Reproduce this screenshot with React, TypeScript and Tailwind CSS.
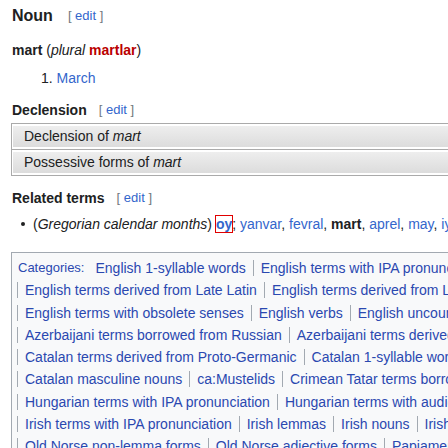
import React from "react";

const font = "font-['Liberation_Sans',Arial,sans-serif]";

function Edit({ className = "" }: { className?: string }) {
  return (
    <span className={`text-[13px] text-[#72777d] ${className}`}>
      [ <span className="text-[#3366cc]">edit</span> ]
    </span>
  );
}

function Cat({ children, first = false }: { children: React.ReactNode; first?: boolean }) {
  return (
    <span
      className={`inline-block leading-[16px] px-[7px] ${first ? "ml-[4px]" : "border-l border-[#a2a9b1]"}`}
    >
      {children}
    </span>
  );
}

const catRows: string[][] = [
  ["English terms derived from Late Latin", "English terms derived from Latin"],
  ["English terms with obsolete senses", "English verbs", "English uncountable nouns"],
  ["Azerbaijani terms borrowed from Russian", "Azerbaijani terms derived from Russian"],
  ["Catalan terms derived from Proto-Germanic", "Catalan 1-syllable words"],
  ["Catalan masculine nouns", "ca:Mustelids", "Crimean Tatar terms borrowed from Russian"],
  ["Hungarian terms with IPA pronunciation", "Hungarian terms with audio links"],
  ["Irish terms with IPA pronunciation", "Irish lemmas", "Irish nouns", "Irish masculine nouns"],
  ["Old Norse non-lemma forms", "Old Norse adjective forms", "Papiamentu lemmas"],
];

export default function App() {
  return (
    <div className={`w-[448px] h-[448px] overflow-hidden bg-white text-[14px] text-[#202122] ${font}`}>
      <div className="w-[760px] pt-[6px]">
        <div className="flex items-center h-[20px] pl-[12px]">
          <span className="text-[16px] font-bold">Noun</span>
          <Edit className="ml-[15px]" />
        </div>

        <div className="mt-[14px] h-[20px] leading-[20px] pl-[12px]">
          <b>mart</b> (<i>plural</i> <b className="text-[#ba0000]">martlar</b>)
        </div>

        <div className="mt-[8px] h-[20px] leading-[20px] pl-[41px]">
          1. <span className="text-[#3366cc]">March</span>
        </div>

        <div className="mt-[12px] flex items-center h-[20px] pl-[12px]">
          <span className="font-bold">Declension</span>
          <Edit className="ml-[12px]" />
        </div>

        <div className="mt-[3px] ml-[11px] border border-r-0 border-[#aaa]">
          <div className="px-[1px] py-[2px]">
            <div className="h-[21px] leading-[21px] pl-[11px] bg-gradient-to-b from-[#eeeeee] to-[#dcdcdc]">
              Declension of <i>mart</i>
            </div>
          </div>
          <div className="px-[1px] py-[2px] border-t border-[#aaa]">
            <div className="h-[21px] leading-[21px] pl-[11px] bg-gradient-to-b from-[#eeeeee] to-[#dcdcdc]">
              Possessive forms of <i>mart</i>
            </div>
          </div>
        </div>

        <div className="mt-[12px] flex items-center h-[20px] pl-[12px]">
          <span className="font-bold">Related terms</span>
          <Edit className="ml-[12px]" />
        </div>

        <div className="mt-[6px] flex items-center h-[20px] whitespace-nowrap">
          <span className="ml-[21px] w-[4px] h-[4px] rounded-full bg-[#202122]" />
          <span className="ml-[8px]">
            (<i>Gregorian calendar months</i>){" "}
            <b className="text-[#3366cc] outline outline-1 outline-[#e00000]">oy</b>;{" "}
            <span className="text-[#3366cc]">yanvar</span>, <span className="text-[#3366cc]">fevral</span>,{" "}
            <b>mart</b>, <span className="text-[#3366cc]">aprel</span>, <span className="text-[#3366cc]">may</span>,{" "}
            <span className="text-[#3366cc]">iyun</span>, <span className="text-[#3366cc]">iyul</span>
          </span>
        </div>

        <div className="mt-[18px] ml-[11px] border border-r-0 border-[#a2a9b1] bg-[#f8f9fa] pl-[5px] pt-[4px] text-[#2a48b0]">
          <div className="flex items-center h-[22.25px] whitespace-nowrap">
            <span className="ml-[1px] text-[13px]">Categories:</span>
            <Cat first>English 1-syllable words</Cat>
            <Cat>English terms with IPA pronunciation</Cat>
            <Cat>English nouns</Cat>
          </div>
          {catRows.map((row, i) => (
            <div key={i} className="flex items-center h-[22.25px] whitespace-nowrap">
              {row.map((c) => (
                <Cat key={c}>{c}</Cat>
              ))}
            </div>
          ))}
        </div>
      </div>
    </div>
  );
}
